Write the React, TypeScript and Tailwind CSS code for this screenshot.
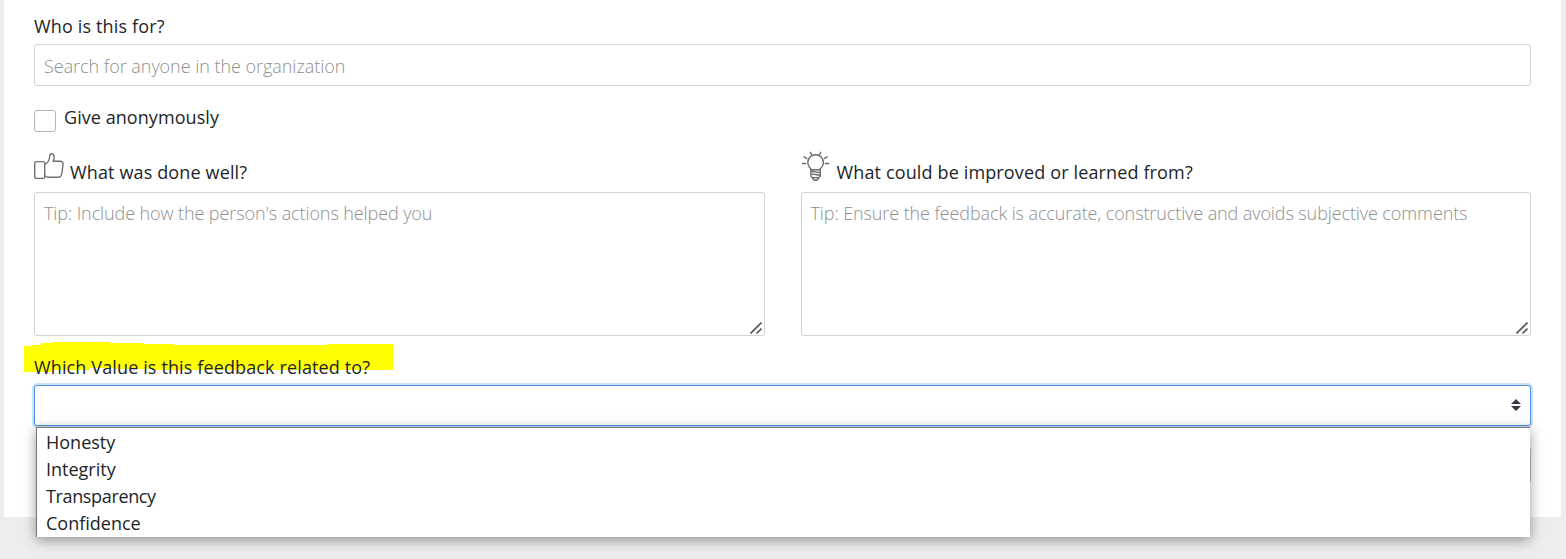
import { useState } from "react";

const ThumbIcon = () => (
    <svg className="h-[30px] w-[30px] shrink-0" viewBox="0 0 30 30" fill="none" stroke="#707070" strokeWidth="1.4" strokeLinejoin="round" strokeLinecap="round">
        <rect x="0.7" y="10.6" width="10" height="16.8" rx="1.6" />
        <path d="M10.8 13.4c2.500-1.200 4.200-3.500 4.700-6.400l.3-2.600c.2-1.300 1-1.800 2-1.700 1.500.2 2.300 1.500 2.300 3.500 0 1.500-.4 3-.8 4.100l6.700-.1c2.200 0 3.300 1 3.100 2.800l-1.100 8.500c-.5 3.200-1.500 4.700-3.300 4.700H14.500c-1.600 0-2.800-.5-3.700-1.400" />
    </svg>
);

const BulbIcon = () => (
    <svg className="h-[31px] w-[30px] shrink-0" viewBox="0 0 30 31" fill="none" stroke="#6a6a6a" strokeWidth="1.4" strokeLinecap="round">
        <path d="M10.200 18.500c-.2-.8-.7-1.100-1.500-1.900a7.800 7.800 0 1 1 11.800 0c-.8.8-1.300 1.100-1.500 1.900" />
        <path d="M9.400 1.300l1.300 2.200M19.800 1.300l-1.300 2.200M3 5.900l2.700 1.500M26.200 5.900l-2.700 1.500M1.500 12.500h3.200M27.700 12.500h-3.200" />
        <path d="M9.900 18.700h9.400v5.800c0 1.300-.7 2-1.700 2.400-.3 1.600-1.300 2.400-3 2.400s-2.700-.8-3-2.400c-1-.4-1.700-1.100-1.700-2.400zM10.200 20.300l8.800 1.300M10.200 22.900l8.800 1.300M11.700 26.600h5.800" />
    </svg>
);

interface FeedbackFieldProps {
    label: string;
    icon: React.ReactNode;
    placeholder: string;
}

const FeedbackField = ({ label, icon, placeholder }: FeedbackFieldProps) => (
    <div className="flex-1">
        <div className="flex h-[41px] items-start">
            {icon}
            <span className="ml-1.5 mt-[9px] leading-6 tracking-[0.14px]">{label}</span>
        </div>
        <div className="relative h-36 rounded-[3px] border border-[#ced4da] px-[9px] pt-2 font-light leading-6 tracking-[-0.1px] text-[#8f8f8f]">
            {placeholder}
            {/* Resize grip */}
            <svg className="absolute bottom-px right-0.5 h-3 w-3" viewBox="0 0 12 12" fill="none" stroke="#555" strokeWidth="1.6">
                <path d="M0.5 11.5l11-11M6.500 11.500l5-5" />
            </svg>
        </div>
    </div>
);

export default function App() {
    const [anonymous, setAnonymous] = useState(false);

    return (
        <div className="h-[559px] overflow-hidden bg-[#ededed] pl-1 pr-[5px] font-['Open_Sans',sans-serif] text-[18px] text-[#212529]">
            <div className="h-[517px] bg-white px-[30px] pt-[14px]">
                <div className="h-[30px] leading-6 tracking-[0.15px]">Who is this for?</div>
                <div className="flex h-[42px] items-center rounded-[3px] border border-[#ced4da] px-[9px] pt-0.5 font-light tracking-[-0.04px] text-[#8f8f8f]">
                    Search for anyone in the organization
                </div>

                <div className="flex h-[65px] items-start pt-[19px]">
                    <button
                        aria-pressed={anonymous}
                        onClick={() => setAnonymous(!anonymous)}
                        className="mt-[5px] h-[22px] w-[22px] rounded-[3px] border border-[#adb5bd] bg-white"
                    />
                    <span className="ml-2 leading-6 tracking-[0.06px]">Give anonymously</span>
                </div>

                <div className="flex gap-9">
                    <FeedbackField
                        label="What was done well?"
                        icon={<ThumbIcon />}
                        placeholder="Tip: Include how the person's actions helped you"
                    />
                    <FeedbackField
                        label="What could be improved or learned from?"
                        icon={<BulbIcon />}
                        placeholder="Tip: Ensure the feedback is accurate, constructive and avoids subjective comments"
                    />
                </div>

                <div className="relative flex h-[49px] items-start pt-[19px]">
                    {/* Marker stroke behind the question */}
                    <svg className="absolute left-[-10px] top-[6px] h-[30px] w-[370px]" viewBox="0 0 370 30" fill="#ffff00">
                        <path d="M0 4H8V3H17V1H28V0H86V1H120V2H150V3H303V2H369V28H130V27H90V26H66V28H30V30H0z" />
                    </svg>
                    <span className="relative leading-6 tracking-[0.13px]">Which Value is this feedback related to?</span>
                </div>

                <div className="relative">
                    <div className="flex h-[41px] items-center justify-end rounded-[3px] border border-[#4a90e2] bg-white pb-0.5 pr-[9px] shadow-[0_0_0_2px_#cfe1f7]">
                        <svg className="h-3 w-2.5" viewBox="0 0 10 12" fill="#343a40">
                            <path d="M0 5L5 0l5 5zM0 7h10l-5 5z" />
                        </svg>
                    </div>
                    {/* Edge of the submit button below the list */}
                    <div className="absolute right-0 top-[62px] h-9 w-10 rounded-[3px] bg-[#bcbcbc]" />
                    <ul className="absolute left-0.5 right-px top-[42px] h-[110px] border-l border-t border-[#767676] bg-white pt-px leading-[27px] shadow-[0_3px_12px_rgba(0,0,0,0.4)]">
                        <li className="pl-[9px]">Honesty</li>
                        <li className="pl-[9px]">Integrity</li>
                        <li className="pl-[9px] tracking-[-0.36px]">Transparency</li>
                        <li className="pl-[9px]">Confidence</li>
                    </ul>
                </div>
            </div>
        </div>
    );
}
